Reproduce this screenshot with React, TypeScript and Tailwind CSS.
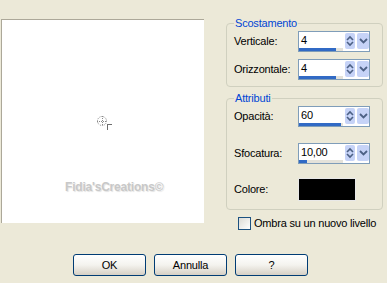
const ROWS_TOP = [
  { label: "Verticale:", value: "4", fill: 37 },
  { label: "Orizzontale:", value: "4", fill: 37 },
];

function Spinner({ value, fill }: { value: string; fill: number }) {
  return (
    <div className="flex h-[21px] w-[72px] border border-[#7F9DB9] bg-white">
      <div className="flex w-[46px] flex-col">
        <div className="flex-1 pl-[2px] pt-[1px] text-[11px] leading-[15px]">{value}</div>
        <div className="mb-[1px] h-[3px] w-[44px] bg-[#E4E2DA]">
          <div className="h-[3px] bg-[#316AC5]" style={{ width: fill }} />
        </div>
      </div>
      <div className="ml-[1px] mt-[1px] flex h-[16px] gap-[2px]">
        <div className="flex w-[10px] items-center justify-center rounded-[2px] bg-[#C6D3F7]">
          <svg width="8" height="12" viewBox="0 0 8 12">
            <path d="M1 5 L4 2 L7 5" fill="none" stroke="#4D6185" strokeWidth="1.6" />
            <path d="M1 7 L4 10 L7 7" fill="none" stroke="#4D6185" strokeWidth="1.6" />
          </svg>
        </div>
        <div className="flex w-[12px] items-center justify-center rounded-[2px] bg-[#C6D3F7]">
          <svg width="9" height="8" viewBox="0 0 9 8">
            <path d="M1 2 L4.5 5.5 L8 2" fill="none" stroke="#4D6185" strokeWidth="1.8" />
          </svg>
        </div>
      </div>
    </div>
  );
}

function Row({ label, children }: { label: string; children: React.ReactNode }) {
  return (
    <div className="flex items-center">
      <span className="w-[64px]">{label}</span>
      {children}
    </div>
  );
}

function XpButton({ label }: { label: string }) {
  return (
    <button className="h-[22px] w-[73px] rounded-[3px] border border-[#003C74] bg-gradient-to-b from-white via-[#F4F3EE] to-[#D6D0C5] text-[11px] text-black">
      {label}
    </button>
  );
}

export default function App() {
  return (
    <div
      className="flex h-[283px] w-[387px] flex-col bg-[#ECE9D8] text-[11px] leading-[13px] tracking-[-0.2px] text-black"
      style={{ fontFamily: "Tahoma, 'Liberation Sans', Arial, sans-serif" }}
    >
      <div className="flex items-start">
        <div className="ml-[1px] mt-[19px] flex h-[204px] w-[203px] flex-col items-start border-l border-t border-[#ACA899] bg-white">
          <svg className="ml-[94px] mt-[95px]" width="18" height="16" viewBox="0 0 18 16">
            <g stroke="#8A8A8A" strokeWidth="1" fill="none" strokeDasharray="1 1">
              <circle cx="6" cy="6" r="4.5" />
              <path d="M1 6.5 H11 M6.5 1 V11" />
            </g>
            <path d="M11 9.5 H16 M11.5 9.5 V15" stroke="#6E6E6E" strokeWidth="1" fill="none" />
          </svg>
          <span className="ml-[63px] mt-[50px] text-[12px] font-bold tracking-[-0.2px] text-[#C8C8C8] [text-shadow:1px_1px_1px_#E2E2E2]">
            Fidia'sCreations©
          </span>
        </div>

        <div className="ml-[22px] flex w-[157px] flex-col">
          <fieldset className="mt-[17px] h-[70px] rounded-[4px] border border-[#D0D0BF] pl-[7px]">
            <legend className="px-[1px] text-[#0046D5]">Scostamento</legend>
            <div className="mt-[1px] flex flex-col gap-[7px]">
              {ROWS_TOP.map((r) => (
                <Row key={r.label} label={r.label}>
                  <Spinner value={r.value} fill={r.fill} />
                </Row>
              ))}
            </div>
          </fieldset>

          <fieldset className="mt-[5px] h-[118px] rounded-[4px] border border-[#D0D0BF] pl-[7px]">
            <legend className="px-[1px] text-[#0046D5]">Attributi</legend>
            <div className="mt-[1px] flex flex-col">
              <Row label="Opacità:">
                <Spinner value="60" fill={42} />
              </Row>
              <div className="mt-[16px]">
                <Row label="Sfocatura:">
                  <Spinner value="10,00" fill={8} />
                </Row>
              </div>
              <div className="mt-[14px]">
                <Row label="Colore:">
                  <div className="h-[23px] w-[58px] border border-[#E8E8E8] bg-black" />
                </Row>
              </div>
            </div>
          </fieldset>

          <label className="ml-[12px] mt-[7px] flex items-center gap-[3px]">
            <span className="h-[13px] w-[13px] border border-[#1C5180] bg-gradient-to-br from-[#DCDBD5] to-white" />
            <span>Ombra su un nuovo livello</span>
          </label>
        </div>
      </div>

      <div className="ml-[73px] mt-[24px] flex gap-[8px]">
        <XpButton label="OK" />
        <XpButton label="Annulla" />
        <XpButton label="?" />
      </div>
    </div>
  );
}
